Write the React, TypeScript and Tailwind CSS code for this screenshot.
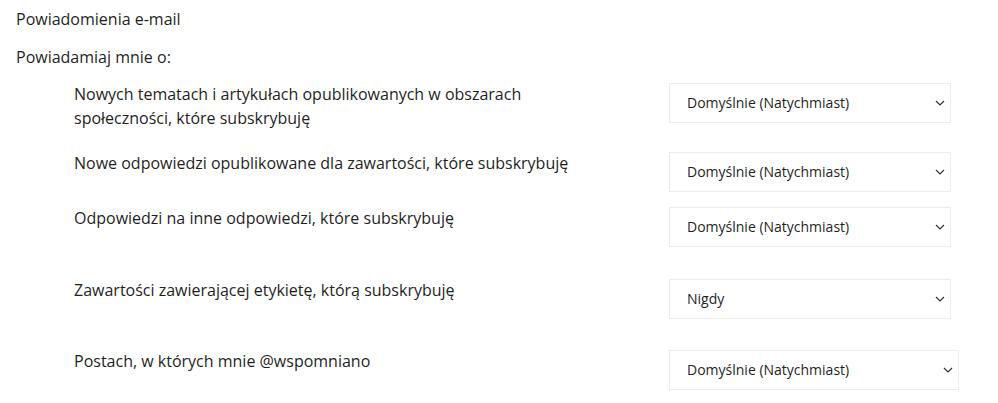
import React from 'react';

type Row = {
  label: string;
  value: string;
  top: string;
  wide?: boolean;
};

const rows: Row[] = [
  {
    label: 'Nowych tematach i artykułach opublikowanych w obszarach społeczności, które subskrybuję',
    value: 'Domyślnie (Natychmiast)',
    top: 'mt-[13px]',
  },
  {
    label: 'Nowe odpowiedzi opublikowane dla zawartości, które subskrybuję',
    value: 'Domyślnie (Natychmiast)',
    top: 'mt-[21px]',
  },
  {
    label: 'Odpowiedzi na inne odpowiedzi, które subskrybuję',
    value: 'Domyślnie (Natychmiast)',
    top: 'mt-[14px]',
  },
  {
    label: 'Zawartości zawierającej etykietę, którą subskrybuję',
    value: 'Nigdy',
    top: 'mt-[31px]',
  },
  {
    label: 'Postach, w których mnie @wspomniano',
    value: 'Domyślnie (Natychmiast)',
    top: 'mt-[30px]',
    wide: true,
  },
];

const options = ['Domyślnie (Natychmiast)', 'Codziennie', 'Co tydzień', 'Nigdy'];

function FrequencySelect({ value, wide }: { value: string; wide?: boolean }) {
  return (
    <div className={`relative mt-px h-[40px] ${wide ? 'w-[290px]' : 'w-[282px]'}`}>
      <select
        defaultValue={value}
        className="h-full w-full appearance-none border border-[#ececec] bg-white pl-[17px] pr-8 text-[14px] text-[#1f1f1f] outline-none"
      >
        {options.map(opt => (
          <option key={opt} value={opt}>
            {opt}
          </option>
        ))}
      </select>
      <svg
        className="pointer-events-none absolute right-[6px] top-1/2 -translate-y-1/2"
        width="10"
        height="6"
        viewBox="0 0 10 6"
        fill="none"
      >
        <path d="M1 1l4 4 4-4" stroke="#333" strokeWidth="1.2" />
      </svg>
    </div>
  );
}

export default function App() {
  return (
    <div
      className="min-h-[403px] bg-white pl-4 pt-[7px] text-[16px] leading-6 text-[#1f1f1f]"
      style={{ fontFamily: '"Open Sans", "Noto Sans", sans-serif' }}
    >
      <p>Powiadomienia e-mail</p>
      <p className="mt-[14px]">Powiadamiaj mnie o:</p>
      <div className="pl-[58px]">
        {rows.map(row => (
          <div key={row.label} className={`flex items-start ${row.top}`}>
            <p className="w-[530px] shrink-0">{row.label}</p>
            <div className="ml-[65px]">
              <FrequencySelect value={row.value} wide={row.wide} />
            </div>
          </div>
        ))}
      </div>
    </div>
  );
}
